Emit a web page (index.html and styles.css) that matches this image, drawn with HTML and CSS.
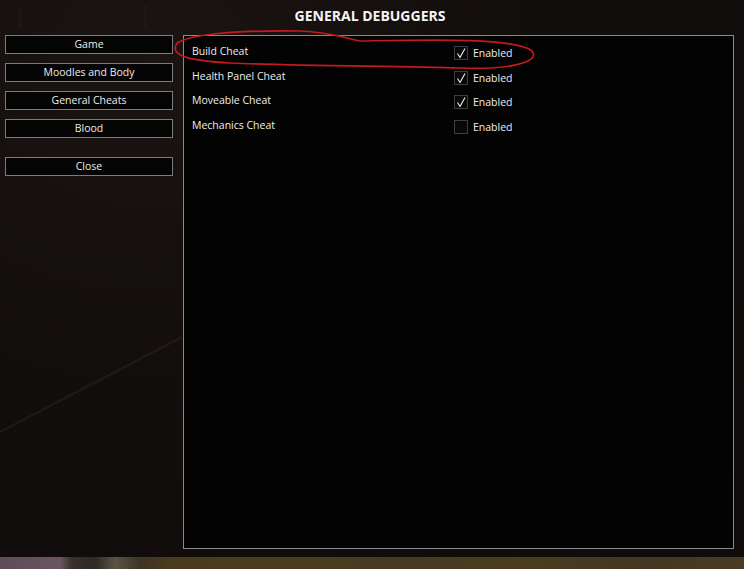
FILE: index.html
```html
<!DOCTYPE html>
<html>
<head>
<meta charset="utf-8">
<link rel="stylesheet" href="styles.css">
</head>
<body>
<div class="screen">
  <svg class="backdrop" width="744" height="569" viewBox="0 0 744 569">
    <line x1="182" y1="337" x2="0" y2="432" stroke="#2c2624" stroke-width="2" opacity="0.5"/>
    <line x1="20" y1="8" x2="20" y2="28" stroke="#221d1c" stroke-width="3" opacity="0.5"/>
    <line x1="145" y1="5" x2="145" y2="28" stroke="#221d1c" stroke-width="3" opacity="0.5"/>
  </svg>
  <div class="window">
    <div class="title">GENERAL DEBUGGERS</div>
    <div class="content">
      <div class="sidebar">
        <div class="btn">Game</div>
        <div class="btn">Moodles and Body</div>
        <div class="btn">General Cheats</div>
        <div class="btn">Blood</div>
        <div class="btn close">Close</div>
      </div>
      <div class="panel">
        <div class="row">
          <span class="label">Build Cheat</span>
          <span class="opt"><span class="box"><svg class="tick" width="12" height="12" viewBox="0 0 12 12"><polyline points="2.5,6.5 5,10.5 10,1.5" fill="none" stroke="#f2f2f2" stroke-width="1.1"/></svg></span><span class="opt-text">Enabled</span></span>
        </div>
        <div class="row">
          <span class="label">Health Panel Cheat</span>
          <span class="opt"><span class="box"><svg class="tick" width="12" height="12" viewBox="0 0 12 12"><polyline points="2.5,6.5 5,10.5 10,1.5" fill="none" stroke="#f2f2f2" stroke-width="1.1"/></svg></span><span class="opt-text">Enabled</span></span>
        </div>
        <div class="row">
          <span class="label">Moveable Cheat</span>
          <span class="opt"><span class="box"><svg class="tick" width="12" height="12" viewBox="0 0 12 12"><polyline points="2.5,6.5 5,10.5 10,1.5" fill="none" stroke="#f2f2f2" stroke-width="1.1"/></svg></span><span class="opt-text">Enabled</span></span>
        </div>
        <div class="row">
          <span class="label">Mechanics Cheat</span>
          <span class="opt"><span class="box"></span><span class="opt-text">Enabled</span></span>
        </div>
      </div>
    </div>
  </div>
  <div class="strip"></div>
  <svg class="annot" width="744" height="100" viewBox="0 0 744 100">
    <path d="M 176 44 C 186 35, 230 30, 300 31 C 330 32, 345 38, 360 41 C 420 40, 515 37, 532 51 C 542 64, 500 70, 460 68 C 400 66, 300 66, 230 63 C 195 61, 166 57, 178 42" fill="none" stroke="#c21a1e" stroke-width="1.7"/>
  </svg>
</div>
</body>
</html>
```

FILE: styles.css
```css
html, body {
  margin: 0;
  padding: 0;
  background: #0c0908;
}
.screen {
  position: relative;
  width: 744px;
  height: 569px;
  overflow: hidden;
  display: flex;
  flex-direction: column;
  font-family: "Open Sans", "Noto Sans", sans-serif;
  color: #ededed;
  background: radial-gradient(ellipse at 20% 10%, #1a1412 0%, #120e0c 45%, #0f0b0a 100%);
}
.backdrop {
  position: absolute;
  left: 0;
  top: 0;
  pointer-events: none;
}
.window {
  position: relative;
  height: 557px;
  display: flex;
  flex-direction: column;
}
.title {
  height: 35px;
  box-sizing: border-box;
  padding-top: 6px;
  padding-right: 4px;
  text-align: center;
  font-weight: 700;
  font-size: 14px;
  color: #f4f4f4;
  line-height: 20px;
}
.content {
  display: flex;
  gap: 10px;
  padding-left: 5px;
}
.sidebar {
  width: 168px;
  display: flex;
  flex-direction: column;
  gap: 9px;
}
.btn {
  height: 19px;
  box-sizing: border-box;
  border: 1px solid #7c7c7c;
  background: #040404;
  text-align: center;
  font-size: 10.5px;
  line-height: 17px;
  color: #ececec;
}
.btn.close {
  margin-top: 10px;
}
.panel {
  width: 551px;
  height: 514px;
  box-sizing: border-box;
  border: 1px solid #8a8a8a;
  background: #030303;
  padding: 7px 0 0 8px;
  display: flex;
  flex-direction: column;
}
.row {
  height: 24.5px;
  display: flex;
  align-items: flex-start;
  font-size: 10.5px;
}
.label {
  width: 262px;
  line-height: 16px;
  color: #eeeeee;
}
.opt {
  display: flex;
  align-items: center;
  margin-top: 3px;
  gap: 5px;
}
.box {
  width: 14px;
  height: 14px;
  box-sizing: border-box;
  border: 1px solid #3e3e3e;
  background: #080808;
  display: flex;
  align-items: center;
  justify-content: center;
}
.tick {
  display: block;
}
.opt-text {
  line-height: 14px;
  color: #eeeeee;
}
.strip {
  position: relative;
  height: 12px;
  background:
    linear-gradient(90deg,
      #5e4b57 0px, #6a5560 60px, #3a302b 72px, #2c2a22 95px, #5a5346 115px, #3c3424 140px,
      #4a3b1e 170px, #4d3d20 300px, #463a22 400px, #4c3d20 520px, #433622 640px, #4a3c22 744px);
}
.annot {
  position: absolute;
  left: 0;
  top: 0;
  pointer-events: none;
}
```
